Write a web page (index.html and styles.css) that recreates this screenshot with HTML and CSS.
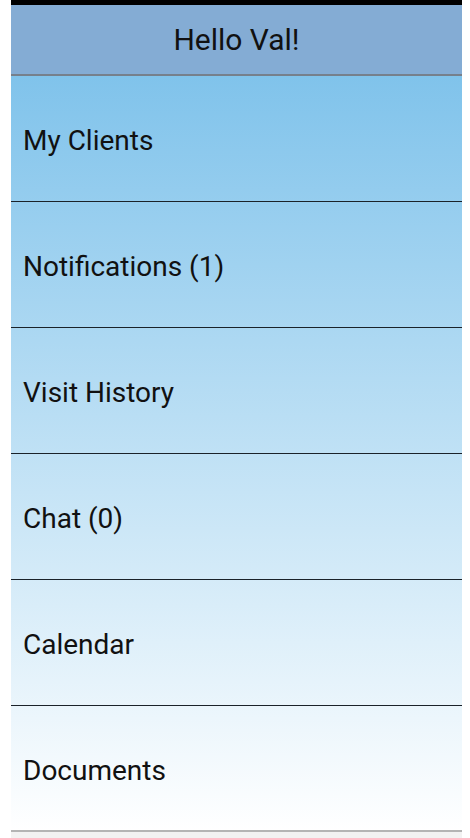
FILE: index.html
```html
<!DOCTYPE html>
<html lang="en">
<head>
    <meta charset="UTF-8">
    <meta name="viewport" content="width=device-width, initial-scale=1.0">
    <title>Home</title>
    <link rel="stylesheet" href="styles.css">
</head>
<body>
    <div class="app">
        <div class="status-bar"></div>
        <h1 class="greeting">Hello Val!</h1>
        <ul class="menu">
            <li>My Clients</li>
            <li>Notifications (1)</li>
            <li>Visit History</li>
            <li>Chat (0)</li>
            <li>Calendar</li>
            <li>Documents</li>
        </ul>
        <div class="footer"></div>
    </div>
</body>
</html>
```

FILE: styles.css
```css
body {
    font-family: Roboto, "Noto Sans", Arial, sans-serif;
    margin: 0;
    padding: 0;
    background-color: white;
}

.app {
    margin: 0 8px 0 11px;
}

.status-bar {
    height: 5px;
    background-color: #000;
}

.greeting {
    margin: 0;
    height: 69px;
    line-height: 69px;
    text-align: center;
    font-size: 30px;
    font-weight: normal;
    color: #111;
    background-color: #84acd4;
    border-bottom: 2px solid #76808c;
}

.menu {
    list-style: none;
    margin: 0;
    padding: 0;
    background: linear-gradient(#80c3eb, #ffffff);
}

.menu li {
    height: 126px;
    box-sizing: border-box;
    display: flex;
    align-items: center;
    padding: 4px 0 0 12px;
    font-size: 28px;
    color: #111;
    border-bottom: 1px solid #1a2229;
}

.menu li:last-child {
    border-bottom: 2px solid #b4b4b4;
}

.footer {
    height: 10px;
    background-color: #f2f2f2;
}
```
